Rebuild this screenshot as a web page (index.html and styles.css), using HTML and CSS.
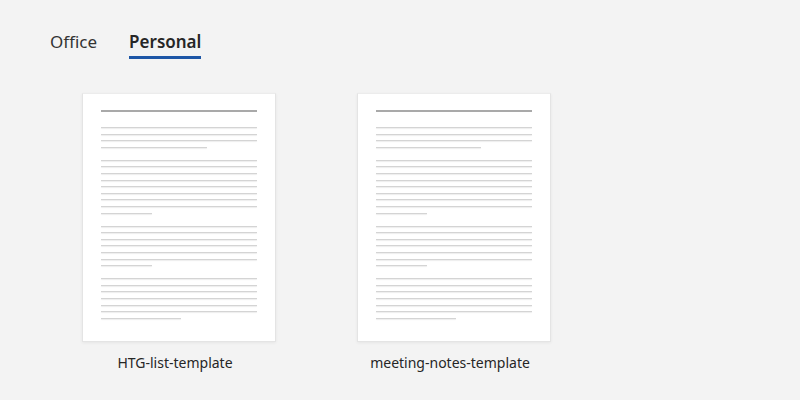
FILE: index.html
```html
<!DOCTYPE html>
<html lang="en">
<head>
    <meta charset="UTF-8">
    <meta name="viewport" content="width=device-width, initial-scale=1.0">
    <title>Templates</title>
    <link rel="stylesheet" href="styles.css">
</head>
<body>
    <div class="tabs">
        <span class="tab">Office</span>
        <span class="tab active">Personal</span>
    </div>

    <div class="templates">
        <div class="card">
            <div class="page">
                <div class="heading"></div>
                <div class="line"></div>
                <div class="line"></div>
                <div class="line"></div>
                <div class="line end" style="width: 68%"></div>
                <div class="line"></div>
                <div class="line"></div>
                <div class="line"></div>
                <div class="line"></div>
                <div class="line"></div>
                <div class="line"></div>
                <div class="line"></div>
                <div class="line"></div>
                <div class="line end" style="width: 33%"></div>
                <div class="line"></div>
                <div class="line"></div>
                <div class="line"></div>
                <div class="line"></div>
                <div class="line"></div>
                <div class="line"></div>
                <div class="line end" style="width: 33%"></div>
                <div class="line"></div>
                <div class="line"></div>
                <div class="line"></div>
                <div class="line"></div>
                <div class="line"></div>
                <div class="line"></div>
                <div class="line" style="width: 51%"></div>
            </div>
            <div class="name">HTG-list-template</div>
        </div>

        <div class="card">
            <div class="page">
                <div class="heading"></div>
                <div class="line"></div>
                <div class="line"></div>
                <div class="line"></div>
                <div class="line end" style="width: 67%"></div>
                <div class="line"></div>
                <div class="line"></div>
                <div class="line"></div>
                <div class="line"></div>
                <div class="line"></div>
                <div class="line"></div>
                <div class="line"></div>
                <div class="line"></div>
                <div class="line end" style="width: 33%"></div>
                <div class="line"></div>
                <div class="line"></div>
                <div class="line"></div>
                <div class="line"></div>
                <div class="line"></div>
                <div class="line"></div>
                <div class="line end" style="width: 33%"></div>
                <div class="line"></div>
                <div class="line"></div>
                <div class="line"></div>
                <div class="line"></div>
                <div class="line"></div>
                <div class="line"></div>
                <div class="line" style="width: 51%"></div>
            </div>
            <div class="name">meeting-notes-template</div>
        </div>
    </div>
</body>
</html>
```

FILE: styles.css
```css
body {
    margin: 0;
    background-color: #f3f3f3;
    font-family: "Noto Sans", "Open Sans", sans-serif;
    color: #262626;
}

/* Tabs */
.tabs {
    display: flex;
    gap: 32px;
    padding: 30px 0 0 50px;
}

.tab {
    font-size: 17px;
    line-height: 24px;
    padding-bottom: 2px;
    color: #333333;
}

.tab.active {
    font-weight: 600;
    color: #262626;
    border-bottom: 3px solid #1d56a6;
}

/* Template cards */
.templates {
    display: flex;
    gap: 81px;
    padding: 34px 0 0 82px;
}

.card {
    display: flex;
    flex-direction: column;
    align-items: center;
    width: 194px;
}

.page {
    box-sizing: border-box;
    width: 194px;
    height: 249px;
    padding: 16px 18px 0 18px;
    background-color: #ffffff;
    border: 1px solid #e4e4e4;
    border-top-color: #ececec;
    box-shadow: 0 1px 3px rgba(0, 0, 0, 0.06);
}

.heading {
    height: 2px;
    background-color: #a9a9a9;
    margin-bottom: 15px;
}

.line {
    height: 1px;
    background-color: #d4d4d4;
    box-shadow: 0 1px 1px #ececec;
    margin-bottom: 5.58px;
}

/* blank row after the last line of a paragraph */
.line.end {
    margin-bottom: 12.16px;
}

.name {
    font-size: 14px;
    line-height: 20px;
    margin-top: 11px;
    padding-right: 8px;
    color: #262626;
}
```
